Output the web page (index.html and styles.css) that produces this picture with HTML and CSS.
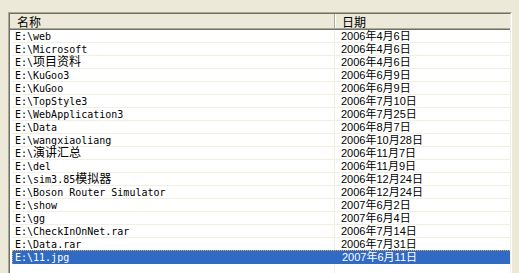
FILE: index.html
```html
<!DOCTYPE html>
<html>
<head>
<meta charset="utf-8">
<link rel="stylesheet" href="styles.css">
</head>
<body>
<div class="list">
  <div class="inner">
    <div class="header">
      <div class="hcol hname">名称</div>
      <div class="hcol hdate">日期</div>
    </div>
    <div class="rows">
      <div class="row"><div class="c name">E:\web</div><div class="c date">2006<span class="cj">年</span>4<span class="cj">月</span>6<span class="cj">日</span></div></div>
      <div class="row"><div class="c name">E:\Microsoft</div><div class="c date">2006<span class="cj">年</span>4<span class="cj">月</span>6<span class="cj">日</span></div></div>
      <div class="row"><div class="c name">E:\<span class="cj">项目资料</span></div><div class="c date">2006<span class="cj">年</span>4<span class="cj">月</span>6<span class="cj">日</span></div></div>
      <div class="row"><div class="c name">E:\KuGoo3</div><div class="c date">2006<span class="cj">年</span>6<span class="cj">月</span>9<span class="cj">日</span></div></div>
      <div class="row"><div class="c name">E:\KuGoo</div><div class="c date">2006<span class="cj">年</span>6<span class="cj">月</span>9<span class="cj">日</span></div></div>
      <div class="row"><div class="c name">E:\TopStyle3</div><div class="c date">2006<span class="cj">年</span>7<span class="cj">月</span>10<span class="cj">日</span></div></div>
      <div class="row"><div class="c name">E:\WebApplication3</div><div class="c date">2006<span class="cj">年</span>7<span class="cj">月</span>25<span class="cj">日</span></div></div>
      <div class="row"><div class="c name">E:\Data</div><div class="c date">2006<span class="cj">年</span>8<span class="cj">月</span>7<span class="cj">日</span></div></div>
      <div class="row"><div class="c name">E:\wangxiaoliang</div><div class="c date">2006<span class="cj">年</span>10<span class="cj">月</span>28<span class="cj">日</span></div></div>
      <div class="row"><div class="c name">E:\<span class="cj">演讲汇总</span></div><div class="c date">2006<span class="cj">年</span>11<span class="cj">月</span>7<span class="cj">日</span></div></div>
      <div class="row"><div class="c name">E:\del</div><div class="c date">2006<span class="cj">年</span>11<span class="cj">月</span>9<span class="cj">日</span></div></div>
      <div class="row"><div class="c name">E:\sim3.85<span class="cj">模拟器</span></div><div class="c date">2006<span class="cj">年</span>12<span class="cj">月</span>24<span class="cj">日</span></div></div>
      <div class="row"><div class="c name">E:\Boson Router Simulator</div><div class="c date">2006<span class="cj">年</span>12<span class="cj">月</span>24<span class="cj">日</span></div></div>
      <div class="row"><div class="c name">E:\show</div><div class="c date">2007<span class="cj">年</span>6<span class="cj">月</span>2<span class="cj">日</span></div></div>
      <div class="row"><div class="c name">E:\gg</div><div class="c date">2007<span class="cj">年</span>6<span class="cj">月</span>4<span class="cj">日</span></div></div>
      <div class="row"><div class="c name">E:\CheckInOnNet.rar</div><div class="c date">2006<span class="cj">年</span>7<span class="cj">月</span>14<span class="cj">日</span></div></div>
      <div class="row"><div class="c name">E:\Data.rar</div><div class="c date">2006<span class="cj">年</span>7<span class="cj">月</span>31<span class="cj">日</span></div></div>
      <div class="row sel"><div class="c name">E:\11.jpg</div><div class="c date">2007<span class="cj">年</span>6<span class="cj">月</span>11<span class="cj">日</span></div></div>
      <div class="row empty"><div class="c name"></div><div class="c date"></div></div>
    </div>
  </div>
</div>
</body>
</html>
```
FILE: styles.css
```css
html, body {
  margin: 0;
  padding: 0;
  background: #ece9d8;
  overflow: hidden;
}

.list {
  margin: 12px 0 0 8px;
  width: 504px;
  height: 270px;
  box-sizing: border-box;
  border: 1px solid;
  border-color: #aca899 #ffffff #ffffff #aca899;
}

.inner {
  height: 100%;
  box-sizing: border-box;
  border: 1px solid;
  border-color: #716f64 #f1efe2 #f1efe2 #716f64;
  background: #ffffff;
  overflow: hidden;
}

.header {
  display: flex;
  height: 16px;
  box-sizing: border-box;
  background: #ece9d8;
  border-bottom: 1px solid #716f64;
  box-shadow: inset 0 -1px 0 #aca899;
  font-family: "Noto Sans CJK SC", "Liberation Sans", sans-serif;
  font-size: 12px;
  line-height: 15px;
  color: #000;
}

.hcol {
  box-sizing: border-box;
  height: 14px;
}

.hname {
  width: 325px;
  padding-left: 7px;
  border-right: 1px solid #aca899;
}

.hdate {
  flex: 1;
  padding-left: 6px;
  border-left: 1px solid #ffffff;
}

.rows {
  margin-left: 2px;
}

.row {
  display: flex;
  height: 13px;
  box-sizing: border-box;
  border-bottom: 1px solid #f1efe2;
  color: #000;
}

.c {
  box-sizing: border-box;
  height: 12px;
  line-height: 13px;
  white-space: nowrap;
}

.name {
  width: 323px;
  padding-left: 3px;
  border-right: 1px solid #f1efe2;
  font-family: "DejaVu Sans Mono", "Noto Sans CJK SC", monospace;
  font-size: 10px;
  letter-spacing: 0;
}

.date {
  flex: 1;
  padding-left: 6px;
  font-family: "Liberation Sans", "Noto Sans CJK SC", sans-serif;
  font-size: 11px;
}

.cj {
  font-family: "Noto Sans CJK SC", sans-serif;
  font-size: 12px;
  letter-spacing: 0;
  line-height: 0;
}

.date .cj {
  font-size: 11px;
}

.row.sel {
  background: #316ac5;
  color: #ffffff;
  height: 14px;
  border-top: 1px dotted #f0b040;
  border-left: 1px dotted #f0b040;
  margin-top: -1px;
  border-bottom: 1px solid #316ac5;
}

.row.sel .c {
  border-right-color: #316ac5;
}

.row.sel .name {
  padding-left: 2px;
}

.row.empty {
  height: 20px;
  border-bottom: none;
}

.row.empty .c {
  height: 20px;
}
```
